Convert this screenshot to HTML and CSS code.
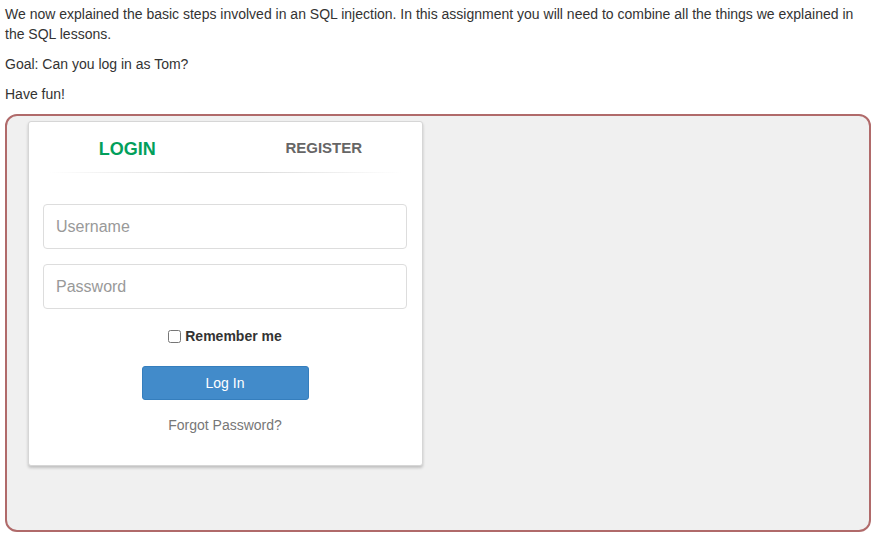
FILE: index.html
```html
<!DOCTYPE html>
<html>
<head>
<meta charset="utf-8">
<link rel="stylesheet" href="styles.css">
</head>
<body>
<div class="lesson">
  <p>We now explained the basic steps involved in an SQL injection. In this assignment you will need to combine all the things we explained in the SQL lessons.</p>
  <p>Goal: Can you log in as Tom?</p>
  <p>Have fun!</p>
  <div class="attack">
    <div class="panel">
      <div class="tabs">
        <div class="tab active">LOGIN</div>
        <div class="tab">REGISTER</div>
      </div>
      <div class="divider"></div>
      <form class="form">
        <input class="field" type="text" placeholder="Username">
        <input class="field" type="password" placeholder="Password">
        <label class="remember"><input type="checkbox" class="check"><span>Remember me</span></label>
        <button type="button" class="btn">Log In</button>
        <a class="forgot">Forgot Password?</a>
      </form>
    </div>
  </div>
</div>
</body>
</html>
```
FILE: styles.css
```css
* { box-sizing: border-box; }
body {
  margin: 0;
  padding: 4px 0 0 5px;
  font-family: "Liberation Sans", Arial, sans-serif;
  font-size: 14px;
  line-height: 20px;
  color: #333;
  background: #fff;
}
.lesson p { margin: 0 0 10px; width: 860px; }
.attack {
  margin-top: 1px;
  width: 866px;
  height: 418px;
  border: 2px solid #b06a6a;
  border-radius: 12px;
  background: #f0f0f0;
  padding: 5px 0 0 21px;
}
.panel {
  width: 395px;
  height: 345px;
  background: #fff;
  border: 1px solid #d6d6d6;
  border-radius: 3px;
  box-shadow: 0 2px 3px rgba(0,0,0,0.2);
}
.tabs {
  display: flex;
  padding-top: 16px;
}
.tab {
  flex: 1;
  text-align: center;
  font-weight: bold;
  font-size: 15px;
  line-height: 20px;
  color: #666;
}
.tab.active {
  color: #029f5b;
  font-size: 18px;
  padding-top: 1px;
}
.divider {
  height: 1px;
  margin: 13px 20px 0 20px;
  background: linear-gradient(to right, rgba(0,0,0,0) 0%, #ddd 40%, #ddd 60%, rgba(0,0,0,0) 100%);
}
.form {
  display: flex;
  flex-direction: column;
  align-items: center;
  padding: 31px 15px 0 14px;
}
.field {
  width: 100%;
  height: 45px;
  border: 1px solid #ddd;
  border-radius: 4px;
  padding: 0 12px;
  font-family: "Liberation Sans", Arial, sans-serif;
  font-size: 16px;
  color: #555;
  margin-bottom: 15px;
  outline: none;
}
.field::placeholder { color: #999; }
.remember {
  display: flex;
  align-items: center;
  font-weight: bold;
  font-size: 14px;
  color: #333;
  margin-top: 2px;
  height: 20px;
}
.check {
  width: 13px;
  height: 13px;
  margin: 0 4px 0 0;
}
.btn {
  margin-top: 20px;
  width: 167px;
  height: 34px;
  background: #428bca;
  border: 1px solid #357ebd;
  border-radius: 3px;
  color: #fff;
  font-family: "Liberation Sans", Arial, sans-serif;
  font-size: 14px;
}
.forgot {
  margin-top: 15px;
  color: #777;
  font-size: 14px;
  line-height: 20px;
}
```
